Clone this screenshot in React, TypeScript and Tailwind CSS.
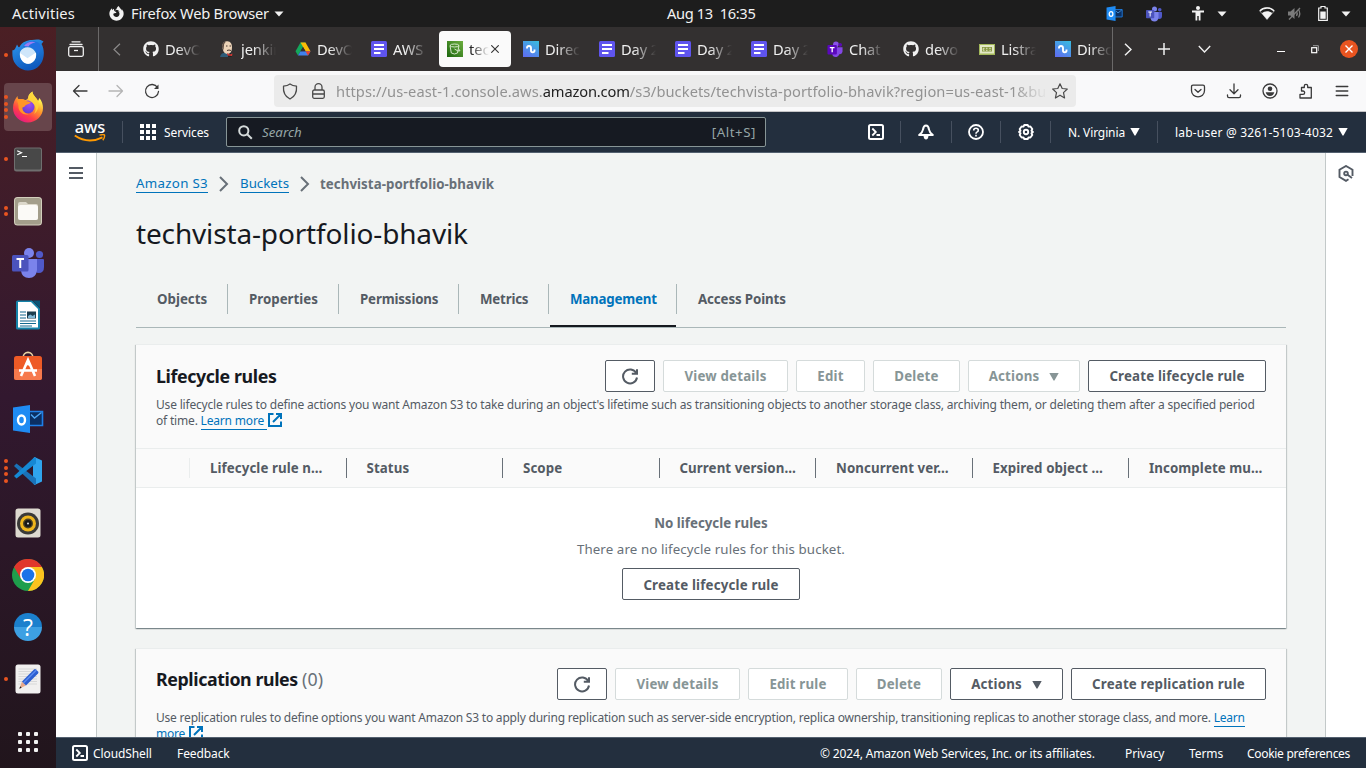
import type { ReactNode } from "react";
import { FaGithub, FaFirefoxBrowser } from "react-icons/fa";

/* ---------- dock icons ---------- */

const Thunderbird = () => (
  <svg width="32" height="32" viewBox="0 0 32 32">
    <defs>
      <linearGradient id="tb" x1="0" y1="0" x2="0.4" y2="1">
        <stop offset="0" stopColor="#2f9bf0" />
        <stop offset="1" stopColor="#0f5bbf" />
      </linearGradient>
    </defs>
    <path d="M0.500 11 C2.500 12 3.500 9 5 5.500 C6 7.500 6.500 8.500 7.500 8 C10 3 15 1 20 1 C24 0 29 0 31.500 2.500 L29.500 5 C32 9 32.500 15 31 20 C29 27 23 31.500 16 31.500 C8 31.500 1 25 0.500 17 C0.300 14 0.300 12.500 0.500 11 Z" fill="url(#tb)" />
    <path d="M11 8 C14 2 22 0.500 27 4 C29.500 8 29 12 26 16 C25 10 19 6 11 8 Z" fill="#1f6fe0" />
    <path d="M12 7 C15 3 20 2 23.500 3.500 C20 4 17.500 5.500 16.500 7.500 Z" fill="#9d7cf0" />
    <path d="M8 13 C10 8.500 16 7 20 9.500 C24 12 25 16 23.500 19.500 C22 23.500 18 25.500 14.500 24.500 C10 23.500 7 18 8 13 Z" fill="#cfe6fa" />
    <path d="M8 14 L15.500 19.300 L24 13.500 C24.800 18 22.500 24 16.500 24.700 C11 25 7.500 19.500 8 14 Z" fill="#fff" />
  </svg>
);

const Firefox = () => (
  <svg width="32" height="32" viewBox="0 0 32 32">
    <defs>
      <linearGradient id="ff" x1="0.8" y1="0.1" x2="0.25" y2="1">
        <stop offset="0.1" stopColor="#fff44f" />
        <stop offset="0.4" stopColor="#ff9a2b" />
        <stop offset="0.7" stopColor="#ff3f47" />
        <stop offset="1" stopColor="#e3158b" />
      </linearGradient>
      <radialGradient id="ffc" cx="0.6" cy="0.3" r="0.8">
        <stop offset="0" stopColor="#a04df0" />
        <stop offset="1" stopColor="#5a3bd0" />
      </radialGradient>
    </defs>
    <path d="M1 17 C1 12 3 8 5.500 5 C5.500 7 6 8 7 8.500 C9 7.500 11 8 13 9 C14 9 15.500 8.500 16 7 C16 4 18 2 20.500 0.500 C20.500 4 24 6 26 10 L27.500 7 C30 10 31 14 31 17 C31 25 24 31.500 16 31.500 C8 31.500 1 25 1 17 Z" fill="url(#ff)" />
    <circle cx="16" cy="16" r="6.500" fill="url(#ffc)" />
    <path d="M5 8.500 C8 7.500 12 8 14 10 L19 11 C18 13 15 13.500 14 14 C12.500 15 13 16 10.500 16.500 C10 20 13 23 17 23 C12 25 6 21 6.500 15 C6.500 13 5 10.500 5 8.500 Z" fill="#ff9526" />
    <path d="M20.500 0.500 C20.500 4 24 6 26 10 C28 16 25 21 22 23 C26 17 22 12 18 10 C16 8 16 4 20.500 0.500Z" fill="#ffd43a" opacity="0.85" />
  </svg>
);

const TerminalApp = () => (
  <svg width="32" height="32" viewBox="0 0 32 32">
    <rect x="2" y="4.500" width="28" height="24" rx="2.500" fill="#6f6f6f" />
    <rect x="3" y="5.500" width="26" height="21" rx="1.500" fill="#484848" />
    <path d="M5.200 7.700 L9.500 9.700 L5.200 11.700 M10 13.500 H15" stroke="#fff" strokeWidth="1.200" fill="none" />
  </svg>
);

const Files = () => (
  <svg width="32" height="32" viewBox="0 0 32 32">
    <rect x="2" y="2" width="28" height="28.500" rx="3.500" fill="#d3cfbd" />
    <rect x="3" y="3" width="26" height="26.500" rx="2.500" fill="#a39e8b" />
    <path d="M6 11 V9 Q6 7 8 7 H14 L16 9 H24 Q26 9 26 11 V23 Q26 25 24 25 H8 Q6 25 6 23 Z" fill="#dcd8cb" />
    <rect x="6" y="10" width="20" height="15" rx="2.500" fill="#fbfaf7" />
  </svg>
);

const Teams = ({ size = 32 }: { size?: number }) => (
  <svg width={size} height={size} viewBox="0 0 32 32">
    <circle cx="27.500" cy="7.500" r="3.600" fill="#5059c9" />
    <circle cx="17" cy="6" r="5" fill="#7b83eb" />
    <path d="M22 12 H31 Q32 12 32 13 V20 Q32 26 26.500 26 Q23 26 22 23 Z" fill="#5059c9" />
    <path d="M10 12 H25 V23 Q24 31 17 31 Q10 31 9 24 Z" fill="#7b83eb" />
    <rect x="0" y="8" width="16.500" height="16.500" rx="1.500" fill="#4b53bc" />
    <path d="M4.500 12 H12 M8.250 12 V21" stroke="#fff" strokeWidth="2" />
  </svg>
);

const Writer = () => (
  <svg width="32" height="32" viewBox="0 0 32 32">
    <path d="M5.500 1.500 H20 L28 9.500 V29 Q28 30.500 26.500 30.500 H5.500 Q4 30.500 4 29 V3 Q4 1.500 5.500 1.500 Z" fill="#1583a9" />
    <path d="M6 3 H19 L26 10 V28.500 H6 Z" fill="#fff" />
    <path d="M20.500 1.500 H28 V9 Z" fill="#0a5576" />
    <path d="M8 13 H14 M8 16 H14 M8 19 H14 M8 22 H24 M8 24.500 H24 M8 27 H20" stroke="#12698f" strokeWidth="1.100" />
    <rect x="15" y="12.500" width="9" height="7" fill="#1c3e50" />
    <path d="M16 19 V17 L18.500 15.500 L20.500 17 L23 15.500 V19 Z" fill="#7fb7d6" />
  </svg>
);

const Software = () => (
  <svg width="32" height="32" viewBox="0 0 32 32">
    <path d="M11 7 C11 -0.500 21 -0.500 21 7" stroke="#e9d4a4" strokeWidth="1.600" fill="none" />
    <rect x="2" y="5" width="28" height="24" rx="2.500" fill="#ee5a26" />
    <path d="M2 18 H30 V26.500 Q30 29 27.500 29 H4.500 Q2 29 2 26.500 Z" fill="#f6794c" />
    <path d="M9 25 L16 9 L23 25 M7 19.500 H25" stroke="#fff" strokeWidth="2.600" fill="none" />
    <path d="M16 9 L19 15 L14 14 Z" fill="#fff" />
  </svg>
);

const Outlook = ({ size = 32 }: { size?: number }) => (
  <svg width={size} height={size} viewBox="0 0 32 32">
    <path d="M17 8.500 H30.500 V22.500 H17" fill="#0b2f63" stroke="#1e7fe8" strokeWidth="1.600" />
    <path d="M19 11.500 L22.500 15 L29.500 9.500" stroke="#4da5f5" strokeWidth="1.400" fill="none" />
    <path d="M1 4.500 L18 2 V30 L1 27.500 Z" fill="#1f8bf3" />
    <ellipse cx="9.500" cy="17" rx="3.500" ry="4.500" fill="none" stroke="#fff" strokeWidth="2.400" />
  </svg>
);

const VsCode = () => (
  <svg width="32" height="32" viewBox="0 0 32 32">
    <path d="M22.500 2 L30 5.500 V26.500 L22.500 30 L21 28 V4 Z" fill="#2fa4ee" />
    <path d="M2 11 L4.500 8.500 L24 23.500 V29.500 L22 29.500 Z" fill="#1a72b8" />
    <path d="M2 21 L4.500 23.500 L24 8.500 V2.500 L22 2.500 Z" fill="#1588d4" />
  </svg>
);

const Rhythmbox = () => (
  <svg width="32" height="32" viewBox="0 0 32 32">
    <rect x="3.500" y="1.500" width="25" height="29" rx="2.500" fill="#dedad0" />
    <circle cx="16" cy="16.500" r="11" fill="#3a3a38" />
    <circle cx="16" cy="16.500" r="8" fill="#efb61c" />
    <circle cx="16" cy="16.500" r="5" fill="#4c4223" />
    <circle cx="16" cy="16.500" r="3.600" fill="#171717" />
    <circle cx="16" cy="16.500" r="1" fill="#ddd" />
  </svg>
);

const Chrome = () => (
  <svg width="32" height="32" viewBox="0 0 32 32">
    <circle cx="16" cy="16" r="16" fill="#1e9e4c" />
    <path d="M2.100 8 A16 16 0 0 1 29.900 8 L16 8 L9.100 20 Z" fill="#e0362b" />
    <path d="M29.900 8 A16 16 0 0 1 16 32 L22.900 20 L23 8 Z" fill="#fcc31e" />
    <path d="M16 8 H29.900 L23 14 Z" fill="#fcc31e" />
    <circle cx="16" cy="16" r="8" fill="#fff" />
    <circle cx="16" cy="16" r="6.300" fill="#1b73e8" />
  </svg>
);

const Help = () => (
  <div className="flex h-[28px] w-[28px] items-center justify-center rounded-full bg-linear-to-b from-[#1b80cd] from-50% to-[#3da0e3] to-50% font-['Open_Sans',sans-serif] text-[23px] leading-none text-white">?</div>
);

const TextEditor = () => (
  <svg width="32" height="32" viewBox="0 0 32 32">
    <rect x="3.500" y="1.500" width="25" height="29" rx="2.500" fill="#f1f0ef" />
    <path d="M6.500 6 H25 M6.500 8.500 H25 M6.500 11 H25 M6.500 13.500 H25 M6.500 16 H25 M6.500 18.500 H25 M6.500 21 H25" stroke="#d5d5d5" strokeWidth="0.900" />
    <path d="M7.500 25.500 L10 18.500 L14 22.500 Z" fill="#e9a98a" />
    <path d="M7.300 25.700 L8.200 23.200 L9.700 24.700 Z" fill="#222" />
    <path d="M10 18.500 L22 6.500 Q23 5.500 24 6.500 L26 8.500 Q27 9.500 26 10.500 L14 22.500 Z" fill="#2d5fd0" />
    <path d="M11.500 20 L24.500 7" stroke="#5b8bf0" strokeWidth="1.500" />
  </svg>
);

const AppGrid = () => (
  <div className="grid grid-cols-3 gap-[4px]">
    {Array.from({ length: 9 }, (_, i) => (
      <i key={i} className="h-[4px] w-[4px] rounded-[1px] bg-[#f2f2f2]" />
    ))}
  </div>
);

const DOCK: { icon: ReactNode; dots: number; active?: boolean }[] = [
  { icon: <Thunderbird />, dots: 1 },
  { icon: <Firefox />, dots: 4, active: true },
  { icon: <TerminalApp />, dots: 1 },
  { icon: <Files />, dots: 2 },
  { icon: <Teams />, dots: 0 },
  { icon: <Writer />, dots: 0 },
  { icon: <Software />, dots: 0 },
  { icon: <Outlook />, dots: 0 },
  { icon: <VsCode />, dots: 4 },
  { icon: <Rhythmbox />, dots: 0 },
  { icon: <Chrome />, dots: 0 },
  { icon: <Help />, dots: 0 },
  { icon: <TextEditor />, dots: 1 },
];

function Dock() {
  return (
    <aside className="flex w-[56px] shrink-0 flex-col items-center gap-1 bg-linear-to-b from-[#4b1f24] via-[#32182f] via-50% to-[#21151c] pt-[4px] pb-[2px]">
      {DOCK.map((d, i) => (
        <div
          key={i}
          className={`relative flex h-[48px] w-[48px] shrink-0 items-center justify-center rounded-[4px] ${d.active ? "bg-[#67454b]" : ""}`}
        >
          {d.icon}
          <div className="absolute inset-y-0 left-0 flex w-[4px] flex-col items-center justify-center gap-[2.500px]">
            {Array.from({ length: d.dots }, (_, k) => (
              <i key={k} className="h-[4px] w-[4px] rounded-full bg-[#e95420]" />
            ))}
          </div>
        </div>
      ))}
      <div className="mt-auto flex h-[48px] items-center">
        <AppGrid />
      </div>
    </aside>
  );
}

/* ---------- desktop top bar ---------- */

const Caret = ({ className = "" }: { className?: string }) => (
  <svg width="10" height="6" viewBox="0 0 10 6" className={`shrink-0 ${className}`}>
    <path d="M0.500 0.500 H9.500 L5 5.500 Z" fill="currentColor" />
  </svg>
);

function TopBar() {
  return (
    <header className="flex h-[27px] shrink-0 items-center bg-[#1d1d1d] text-[14.67px] leading-[27px] text-[#f2f2f2]">
      <div className="flex w-[667px] shrink-0 items-center whitespace-nowrap pl-[12px]">
        <span className="w-[97px] tracking-[0.2px]">Activities</span>
        <FaFirefoxBrowser size={15} />
        <span className="ml-[7px] w-[143px] tracking-[-0.2px]">Firefox Web Browser</span>
        <Caret />
      </div>
      <div className="whitespace-pre tracking-[-0.36px]">Aug 13  16:35</div>
      <div className="flex flex-1 items-center justify-end pr-[15px]">
        <Outlook size={17} />
        <span className="ml-[23px] flex"><Teams size={16} /></span>
        <svg width="14" height="15" viewBox="0 0 14 15" className="ml-[29px]">
          <circle cx="7" cy="2" r="2" fill="currentColor" />
          <path d="M1 5.500 H13 M5.400 5 V14.500 M8.600 5 V14.500 M7 5 V10" stroke="currentColor" strokeWidth="1.800" fill="none" />
        </svg>
        <Caret className="ml-[12px]" />
        <svg width="16" height="13" viewBox="0 0 16 13" className="ml-[32px]">
          <path d="M8 12.500 L0.800 4 C4.500 -0.500 11.500 -0.500 15.200 4 Z" fill="none" stroke="#8d8d8d" strokeWidth="1" />
          <path d="M0.800 4 C4.500 0 11.500 0 15.200 4" fill="none" stroke="#f2f2f2" strokeWidth="1.400" />
          <path d="M8 12.500 L2.800 6.200 C5.500 3.500 10.500 3.500 13.200 6.200 Z" fill="#f2f2f2" />
        </svg>
        <svg width="16" height="15" viewBox="0 0 16 15" className="ml-[12px] text-[#7b7b7b]">
          <path d="M1 5.500 H3.500 L7.500 2 V13 L3.500 9.500 H1 Z" fill="currentColor" />
          <path d="M9.500 5 Q11 7.500 9.500 10 M11.500 3.500 Q14 7.500 11.500 11.500" stroke="currentColor" fill="none" strokeWidth="1.300" />
          <path d="M2 13.500 L13 2" stroke="currentColor" strokeWidth="1.300" />
        </svg>
        <svg width="10" height="15" viewBox="0 0 10 15" className="ml-[15px]">
          <path d="M3 0.500 H7 V2 H9.300 V14.300 H0.700 V2 H3 Z" fill="none" stroke="currentColor" strokeWidth="1.200" />
          <rect x="2.300" y="5.500" width="5.400" height="7.300" fill="currentColor" />
        </svg>
        <Caret className="ml-[13px]" />
      </div>
    </header>
  );
}

/* ---------- browser tabs ---------- */

const DriveIcon = () => (
  <svg width="16" height="16" viewBox="0 0 16 16">
    <path d="M5.500 1.500 H10.500 L8 6 L3 14.500 L0.500 10.300 Z" fill="#14a75c" />
    <path d="M5.500 1.500 H10.500 L15.500 10.300 H10.500 Z" fill="#fbbc06" />
    <path d="M3 14.500 L5.500 10.300 H15.500 L13 14.500 Z" fill="#4081ee" />
    <path d="M10.500 10.300 H15.500 L13 14.500 Z" fill="#e9432f" />
    <path d="M5.500 10.300 L8 6 L10.500 10.300 Z" fill="#333030" />
  </svg>
);

const JenkinsIcon = () => (
  <svg width="16" height="16" viewBox="0 0 16 16">
    <path d="M1 16 Q2 12 5 12 L11 11 Q13 12 13 16 Z" fill="#2e5c78" />
    <path d="M9 12 L12 12 L13 16 H9 Z" fill="#222" />
    <path d="M3 5 Q4 0 8.500 0.300 Q13 0.800 13 6 Q13 12 9 13 Q5 13 4 9 Z" fill="#ecd3b8" />
    <path d="M3 6 Q3 1 7 0.500 Q5 2 4.800 6 L4.500 9 Z" fill="#5c4b42" />
    <path d="M7 5 H8.500 M10.500 5 H12 M8 9.500 Q10 8.500 12 9.500" stroke="#4a3830" strokeWidth="1" fill="none" />
    <path d="M8 12 L11 13.500 L13.500 12.500 L13 15 L8.500 14.500 Z" fill="#d33833" />
  </svg>
);

const DocIcon = () => (
  <svg width="16" height="16" viewBox="0 0 16 16">
    <rect width="16" height="16" rx="1.500" fill="#5f54ee" />
    <path d="M3 4 H13 M3 8 H13 M3 12 H9.500" stroke="#fff" strokeWidth="1.800" />
  </svg>
);

const BucketIcon = () => (
  <svg width="16" height="16" viewBox="0 0 16 16">
    <defs>
      <linearGradient id="s3" x1="0" y1="1" x2="1" y2="0">
        <stop offset="0" stopColor="#1b660f" />
        <stop offset="1" stopColor="#6cae3e" />
      </linearGradient>
    </defs>
    <rect width="16" height="16" fill="url(#s3)" />
    <path d="M3 4.500 L4.300 12 Q7.500 14 10.500 12 L12 4.500 M3 4.500 Q3.500 3 7.500 3 Q11.500 3 12 4.500 Q11.500 6 7.500 6 Q3.500 6 3 4.500 M7.500 8 Q11 10.500 12.700 10 Q13.500 9.300 11.500 8" fill="none" stroke="#e3f0da" strokeWidth="0.900" />
  </svg>
);

const WaveIcon = () => (
  <svg width="16" height="16" viewBox="0 0 16 16">
    <defs>
      <linearGradient id="wv" x1="0.2" y1="1" x2="0.8" y2="0">
        <stop offset="0" stopColor="#5d6ff0" />
        <stop offset="1" stopColor="#3bb8e0" />
      </linearGradient>
    </defs>
    <rect width="16" height="16" fill="url(#wv)" />
    <path d="M4 7.500 V7 Q4 5 6 5 Q8 5 8 7 V9.500 Q8 11.300 9.700 11.300 Q11.500 11.300 11.500 9.500 V8.500" fill="none" stroke="#fff" strokeWidth="1.900" />
  </svg>
);

const TeamsTabIcon = () => (
  <svg width="17" height="17" viewBox="0 0 17 17">
    <circle cx="9.500" cy="3" r="3" fill="#8a52e8" />
    <circle cx="14" cy="3.500" r="2" fill="#5b0ab5" />
    <path d="M7 6 H16.500 V11 Q16 14 13 13.500 Q12 16.500 9 16.500 Q6 16.500 5.500 13 Z" fill="#8447e6" />
    <rect x="0.500" y="3.800" width="10" height="10" rx="1" fill="#5a08bd" />
    <path d="M3 6.500 H8 M5.500 6.500 V11.500" stroke="#fff" strokeWidth="1.400" />
  </svg>
);

const CbsIcon = () => (
  <svg width="16" height="16" viewBox="0 0 16 16">
    <rect y="3" width="16" height="11" fill="#a3b85a" />
    <rect x="1" y="4" width="14" height="8.500" fill="#e3e8c6" />
    <rect x="3" y="6" width="10" height="4.500" fill="#8a9a45" />
    <path d="M5.500 7.300 H4.200 V9.300 H5.500 M7 7.300 H8.500 M7 9.300 H8.500 M11.800 7.300 H10.200 M10.500 9.300 H11.800" fill="none" stroke="#f3f6e0" strokeWidth="0.800" />
  </svg>
);

const TABS: { icon: ReactNode; label: string; active?: boolean }[] = [
  { icon: <FaGithub size={16} />, label: "DevO" },
  { icon: <JenkinsIcon />, label: "jenkin" },
  { icon: <DriveIcon />, label: "DevO" },
  { icon: <DocIcon />, label: "AWS" },
  { icon: <BucketIcon />, label: "tech", active: true },
  { icon: <WaveIcon />, label: "Direc" },
  { icon: <DocIcon />, label: "Day 2" },
  { icon: <DocIcon />, label: "Day 2" },
  { icon: <DocIcon />, label: "Day 2" },
  { icon: <TeamsTabIcon />, label: "Chat" },
  { icon: <FaGithub size={16} />, label: "devo" },
  { icon: <CbsIcon />, label: "Listra" },
  { icon: <WaveIcon />, label: "Direc" },
];

function TabStrip() {
  return (
    <div className="flex h-[44px] shrink-0 items-center bg-[#333030] text-[#f0f0f0]">
      <div className="flex h-full w-[43px] items-center justify-center border-r border-[#6b6969]">
        <svg width="16" height="16" viewBox="0 0 16 16" className="-ml-[3px]">
          <path d="M4 0.800 H12 M2 3.500 H14" stroke="currentColor" strokeWidth="1.300" strokeLinecap="round" />
          <rect x="0.700" y="5.700" width="14.600" height="9.600" rx="1.500" fill="none" stroke="currentColor" strokeWidth="1.300" />
          <path d="M6 9.500 H10" stroke="currentColor" strokeWidth="1.300" />
        </svg>
      </div>
      <div className="flex w-[36px] justify-center text-[#8b8989]">
        <svg width="8" height="13" viewBox="0 0 8 13">
          <path d="M7 0.800 L1 6.500 L7 12.200" fill="none" stroke="currentColor" strokeWidth="1.200" />
        </svg>
      </div>
      <div className="flex h-full w-[978px] shrink-0 items-center gap-[4px] overflow-hidden border-r border-[#6b6969]">
        {TABS.map((t, i) => (
          <div
            key={i}
            className={`flex h-[36px] w-[72px] shrink-0 items-center rounded-[4px] pl-[8px] ${t.active ? "bg-[#fafafa] text-[#222]" : ""}`}
          >
            <span className="flex w-[16px] shrink-0">{t.icon}</span>
            <span
              className={`ml-[6px] overflow-hidden whitespace-nowrap text-[14.67px] leading-[24px] ${t.active ? "w-[20px] mask-r-from-10% mask-r-to-100%" : "w-[35px] tracking-[-0.1px] mask-r-from-35% mask-r-to-100%"}`}
            >
              {t.label}
            </span>
            {t.active && (
              <svg width="8" height="8" viewBox="0 0 8 8" className="ml-[2px]">
                <path d="M0.300 0.300 L7.700 7.700 M7.700 0.300 L0.300 7.700" stroke="#333" strokeWidth="1.100" />
              </svg>
            )}
          </div>
        ))}
      </div>
      <div className="flex flex-1 items-center">
        <svg width="8" height="13" viewBox="0 0 8 13" className="ml-[11px]">
          <path d="M1 0.800 L7 6.500 L1 12.200" fill="none" stroke="currentColor" strokeWidth="1.500" />
        </svg>
        <svg width="12" height="12" viewBox="0 0 12 12" className="ml-[26px]">
          <path d="M6 0 V12 M0 6 H12" stroke="currentColor" strokeWidth="1.500" />
        </svg>
        <svg width="13" height="8" viewBox="0 0 13 8" className="ml-[28px]">
          <path d="M0.800 1 L6.500 7 L12.200 1" fill="none" stroke="currentColor" strokeWidth="1.400" />
        </svg>
        <i className="mt-[5px] ml-[66px] h-[1px] w-[8px] bg-white" />
        <svg width="8" height="9" viewBox="0 0 8 9" className="ml-[26px]">
          <rect x="0.700" y="2.700" width="5" height="5" fill="none" stroke="#fff" strokeWidth="1.200" />
          <path d="M2 0.700 H7.400 V6" fill="none" stroke="#aaa" strokeWidth="0.900" />
        </svg>
        <span className="ml-[21px] flex h-[18px] w-[18px] items-center justify-center rounded-full bg-[#e95420]">
          <svg width="8" height="8" viewBox="0 0 8 8">
            <path d="M0.500 0.500 L7.500 7.500 M7.500 0.500 L0.500 7.500" stroke="#fff" strokeWidth="1.400" />
          </svg>
        </span>
      </div>
    </div>
  );
}

/* ---------- browser toolbar ---------- */

const ToolIcon = ({ children, dim }: { children: ReactNode; dim?: boolean }) => (
  <span className={`flex w-[36px] justify-center ${dim ? "text-[#b5b5b5]" : "text-[#3a3a3a]"}`}>
    <svg width="16" height="16" viewBox="0 0 16 16" fill="none" stroke="currentColor" strokeWidth="1.300" strokeLinecap="round" strokeLinejoin="round">
      {children}
    </svg>
  </span>
);

function Toolbar() {
  return (
    <div className="flex h-[41px] shrink-0 items-center border-b border-[#c4c4c6] bg-[#f9f9fa] pr-[6px] pl-[6px]">
      <ToolIcon><path d="M15 8 H1.500 M7 2.500 L1.500 8 L7 13.500" /></ToolIcon>
      <ToolIcon dim><path d="M1 8 H14.500 M9 2.500 L14.500 8 L9 13.500" /></ToolIcon>
      <ToolIcon>
        <path d="M13.500 4.500 A6.500 6.500 0 1 0 14.500 8.500" />
        <path d="M14.500 1.500 V6 H10 Z" fill="currentColor" stroke="none" />
      </ToolIcon>
      <div className="ml-[104px] flex h-[32px] w-[802px] items-center rounded-[4px] bg-[#ebebeb] text-[#4a4a4a]">
        <svg width="16" height="17" viewBox="0 0 16 17" className="ml-[8px]" fill="none" stroke="currentColor" strokeWidth="1.300" strokeLinejoin="round">
          <path d="M8 1 C10 2.500 12 3 14.500 3.200 C15 9 13 13.500 8 16 C3 13.500 1 9 1.500 3.200 C4 3 6 2.500 8 1 Z" />
        </svg>
        <svg width="13" height="16" viewBox="0 0 13 16" className="ml-[14px]" fill="none" stroke="currentColor" strokeWidth="1.300">
          <rect x="0.700" y="7" width="11.600" height="8.300" rx="1.500" />
          <path d="M3 7 V4.200 A3.500 3.500 0 0 1 10 4.200 V7 M1 11 H12" />
        </svg>
        <div className="ml-[11px] flex w-[712px] overflow-hidden whitespace-nowrap text-[14.67px] leading-[24px] text-[#929292] mask-r-from-95% mask-r-to-100%">
          <span className="tracking-[0.07px]">https://us-east-1.console.aws.</span>
          <span className="tracking-[-0.15px] text-[#222]">amazon.com</span>
          <span className="tracking-[0.08px]">/s3/buckets/techvista-portfolio-bhavik?region=us-east-1&amp;bu</span>
        </div>
        <svg width="16" height="16" viewBox="0 0 16 16" className="ml-[4px]" fill="none" stroke="currentColor" strokeWidth="1.200" strokeLinejoin="round">
          <path d="M8 0.800 L10.200 5.500 L15.300 6 L11.500 9.600 L12.600 15 L8 12.200 L3.400 15 L4.500 9.600 L0.700 6 L5.800 5.500 Z" />
        </svg>
      </div>
      <div className="ml-auto flex">
        <ToolIcon>
          <path d="M3 2.200 H13 Q14.500 2.200 14.500 3.700 V7.500 C14.500 16 1.500 16 1.500 7.500 V3.700 Q1.500 2.200 3 2.200 Z M5 6.500 L8 9.300 L11 6.500" />
        </ToolIcon>
        <ToolIcon><path d="M8 1 V10.500 M4 6.800 L8 10.700 L12 6.800 M1.500 12 V13 Q1.500 14.700 3 14.700 H13 Q14.500 14.700 14.500 13 V12" /></ToolIcon>
        <ToolIcon>
          <circle cx="8" cy="8" r="7" />
          <circle cx="8" cy="5.800" r="2.300" fill="currentColor" stroke="none" />
          <path d="M3.700 9.300 H12.300 Q11.500 13 8 13 Q4.500 13 3.700 9.300 Z" fill="currentColor" stroke="none" />
        </ToolIcon>
        <ToolIcon><path d="M2 15 H13.300 V4.500 H9.700 V3 A1.700 1.700 0 0 0 6.300 3 V4.500 H3.500 V8 H5 A1.600 1.600 0 0 1 5 11.300 H2 Z" /></ToolIcon>
        <ToolIcon><path d="M2.200 3.500 H13.800 M2.200 8 H13.800 M2.200 12.500 H13.800" /></ToolIcon>
      </div>
    </div>
  );
}

/* ---------- AWS navigation ---------- */

const ShellIcon = () => (
  <svg width="16" height="16" viewBox="0 0 16 16" fill="none" stroke="currentColor" strokeWidth="2">
    <rect x="1" y="1" width="14" height="14" rx="1.500" />
    <path d="M4.300 4.500 L7.800 8 L4.300 11.500 M8.500 11 H12" strokeWidth="1.800" />
  </svg>
);

const Bell = () => (
  <svg width="16" height="16" viewBox="0 0 16 16" fill="none" stroke="currentColor" strokeWidth="2" strokeLinejoin="round">
    <path d="M8 1.500 C6 1.500 5.300 3.500 5 5.500 C4.700 8 3 9.500 1.200 11 H14.800 C13 9.500 11.300 8 11 5.500 C10.700 3.500 10 1.500 8 1.500 Z" />
    <path d="M5.500 12 H10.500 Q10 15.500 8 15.500 Q6 15.500 5.500 12 Z" fill="currentColor" stroke="none" />
  </svg>
);

const Question = () => (
  <svg width="16" height="16" viewBox="0 0 16 16" fill="none" stroke="currentColor" strokeWidth="1.800">
    <circle cx="8" cy="8" r="7" />
    <path d="M5.700 6.500 Q5.700 4.300 8 4.300 Q10.300 4.300 10.300 6.200 Q10.300 7.300 9.200 7.900 Q8 8.500 8 9.700 M8 10.800 V12.500" strokeWidth="1.600" />
  </svg>
);

const Gear = () => (
  <svg width="16" height="16" viewBox="0 0 16 16" fill="none" stroke="currentColor" strokeWidth="1.900" strokeLinejoin="round">
    <path d="M6.300 1 H9.700 L10.500 2.600 L12.400 2.500 L14.300 5 L13.500 6.700 L14.900 8 L13.500 9.300 L14.300 11 L12.400 13.500 L10.500 13.400 L9.700 15 H6.300 L5.500 13.400 L3.600 13.500 L1.700 11 L2.500 9.300 L1.100 8 L2.500 6.700 L1.700 5 L3.600 2.500 L5.500 2.600 Z" />
    <circle cx="8" cy="8" r="2.200" />
  </svg>
);

const Tri = ({ className = "" }: { className?: string }) => (
  <svg width="10" height="8" viewBox="0 0 10 8" className={`shrink-0 ${className}`}>
    <path d="M0.300 0 H9.700 L5.600 7.300 Q5 8 4.400 7.300 Z" fill="currentColor" />
  </svg>
);

const Sep = () => <i className="h-[22px] w-px shrink-0 bg-[#46505f]" />;

function AwsNav() {
  return (
    <nav className="flex h-[41px] shrink-0 items-center border-b border-[#53606f] bg-[#232f3e] text-[12px] leading-[18px] text-white">
      <div className="ml-[18px] flex w-[32px] flex-col items-center">
        <span className="mt-[-2px] text-[16.5px] leading-[13px] font-medium tracking-[-0.1px]">aws</span>
        <svg width="32" height="9" viewBox="0 0 32 9" className="mt-[1px]">
          <path d="M0.800 1.500 Q14 10.500 28.500 3.300" fill="none" stroke="#f90" strokeWidth="2" />
          <path d="M25.500 1.200 Q29.500 0 30.500 1 Q31 3.500 28.800 6.300" fill="none" stroke="#f90" strokeWidth="1.400" />
        </svg>
      </div>
      <span className="mr-[17px] ml-[16px] flex"><Sep /></span>
      <div className="grid grid-cols-3 gap-[2px]">
        {Array.from({ length: 9 }, (_, i) => (
          <i key={i} className="h-[4px] w-[4px] bg-white" />
        ))}
      </div>
      <span className="ml-[8px] w-[62px] pt-[2px] tracking-[-0.1px]">Services</span>
      <div className="flex h-[30px] w-[540px] items-center rounded-[2px] border border-[#879596] bg-[#161a22] text-[13.3px] text-[#95a5a6]">
        <svg width="15" height="15" viewBox="0 0 15 15" className="ml-[11px]" fill="none" stroke="#d5dbdb" strokeWidth="2">
          <circle cx="5.800" cy="5.800" r="4.600" />
          <path d="M9.200 9.200 L13.800 13.800" />
        </svg>
        <span className="ml-[9px] italic">Search</span>
        <span className="mr-[9px] ml-auto tracking-[0.55px]">[Alt+S]</span>
      </div>
      <div className="ml-auto flex items-center">
        <span className="flex w-[49px] justify-center"><ShellIcon /></span>
        <Sep />
        <span className="flex w-[50px] justify-center"><Bell /></span>
        <Sep />
        <span className="flex w-[48px] justify-center"><Question /></span>
        <Sep />
        <span className="flex w-[49px] justify-center"><Gear /></span>
        <Sep />
        <span className="ml-[17px] w-[62px] pt-[2px] tracking-[-0.12px]">N. Virginia</span>
        <Tri />
        <i className="w-[17px]" />
        <Sep />
        <span className="ml-[17px] w-[163px] pt-[2px] whitespace-nowrap tracking-[0.2px]">lab-user @ 3261-5103-4032</span>
        <Tri className="mr-[18px]" />
      </div>
    </nav>
  );
}

/* ---------- S3 page ---------- */

const Refresh = () => (
  <svg width="18" height="18" viewBox="0 0 18 18" fill="none" stroke="currentColor" strokeWidth="2">
    <path d="M15.200 5 A7 7 0 1 0 16 9.500" />
    <path d="M16 1.300 V5.700 H10.800" />
  </svg>
);

const External = () => (
  <svg width="14" height="14" viewBox="0 0 14 14" fill="none" stroke="currentColor" strokeWidth="2" className="inline-block align-[-2px]">
    <path d="M5.500 1 H1 V13 H13 V8.500 M8 1 H13 V6 M13 1 L5 9" />
  </svg>
);

function Button({ children, off, className = "" }: { children: ReactNode; off?: boolean; className?: string }) {
  return (
    <button
      className={`flex h-[32px] shrink-0 items-center justify-center rounded-[2px] border bg-white pt-px text-[13.3px] font-bold tracking-[0.18px] whitespace-nowrap ${off ? "border-[#d5dbdb] text-[#879596]" : "border-[#545b64] text-[#545b64]"} ${className}`}
    >
      {children}
    </button>
  );
}

const Chevron = () => (
  <svg width="10" height="16" viewBox="0 0 10 16" fill="none" stroke="#687078" strokeWidth="2">
    <path d="M1 1 L8 8 L1 15" />
  </svg>
);

const PAGE_TABS = [
  { label: "Objects", cls: "w-[92px] pl-[21px]" },
  { label: "Properties", cls: "w-[111px] pl-[21px]" },
  { label: "Permissions", cls: "w-[120px] pl-[21px] tracking-[-0.15px]" },
  { label: "Metrics", cls: "w-[90px] pl-[21px] tracking-[-0.2px]" },
  { label: "Management", cls: "w-[128px] pl-[21px] tracking-[-0.2px]" },
  { label: "Access Points", cls: "w-[130px] pl-[21px] tracking-[-0.12px]" },
];

const COLUMNS = ["Lifecycle rule n…", "Status", "Scope", "Current version…", "Noncurrent ver…", "Expired object …", "Incomplete mu…"];

const PANEL = "shadow-[0_1px_1px_0_rgba(0,28,36,0.3),1px_1px_1px_0_rgba(0,28,36,0.15),-1px_1px_1px_0_rgba(0,28,36,0.15)] border-t border-[#eaeded] bg-white";

function Lifecycle() {
  return (
    <section className={`mt-4 h-[284px] shrink-0 ${PANEL}`}>
      <div className="h-[103px] bg-[#fafafa] px-[20px] pt-[15px]">
        <div className="flex items-center">
          <h2 className="pt-px text-[17.8px] font-bold tracking-[-0.38px] text-[#16191f]">Lifecycle rules</h2>
          <div className="ml-auto flex gap-2">
            <Button className="w-[50px]"><Refresh /></Button>
            <Button off className="w-[125px]">View details</Button>
            <Button off className="w-[69px]">Edit</Button>
            <Button off className="w-[87px]">Delete</Button>
            <Button off className="w-[112px]">Actions<Tri className="ml-[10px]" /></Button>
            <Button className="w-[178px]">Create lifecycle rule</Button>
          </div>
        </div>
        <p className="mt-[5px] text-[12px] leading-[16px] tracking-[-0.185px] whitespace-nowrap text-[#545b64]">
          Use lifecycle rules to define actions you want Amazon S3 to take during an object's lifetime such as transitioning objects to another storage class, archiving them, or deleting them after a specified period
          <br />
          of time. <a className="border-b border-[#0073bb] text-[#0073bb]">Learn more </a>
          <span className="ml-px text-[#0073bb]"><External /></span>
        </p>
      </div>
      <div className="flex h-[40px] items-center border-y border-[#eaeded] bg-[#fafafa]">
        <i className="w-[53px] shrink-0" />
        {COLUMNS.map((c, i) => (
          <div
            key={c}
            className={`flex h-[20px] w-[156.500px] shrink-0 items-center border-l pt-[2px] pl-[20px] text-[13.3px] font-bold tracking-[0.08px] whitespace-nowrap text-[#545b64] ${i === 0 ? "border-[#eaeded]" : "border-[#687078]"}`}
          >
            {c}
          </div>
        ))}
      </div>
      <div className="flex flex-col items-center pt-[25px] text-[13.3px] leading-[20px] text-[#687078]">
        <b className="font-bold">No lifecycle rules</b>
        <p className="mt-[6px] mb-[9px] tracking-[0.1px]">There are no lifecycle rules for this bucket.</p>
        <Button className="w-[178px]">Create lifecycle rule</Button>
      </div>
    </section>
  );
}

function Replication() {
  return (
    <section className={`mt-5 h-[120px] shrink-0 ${PANEL}`}>
      <div className="h-full bg-[#fafafa] px-[20px] pt-[19px]">
        <div className="flex items-start">
          <h2 className="text-[17.8px] leading-[23px] font-bold tracking-[-0.4px] text-[#16191f]">
            Replication rules <span className="font-normal tracking-[0.1px] text-[#687078]">(0)</span>
          </h2>
          <div className="ml-auto flex gap-2">
            <Button className="w-[50px]"><Refresh /></Button>
            <Button off className="w-[125px]">View details</Button>
            <Button off className="w-[100px]">Edit rule</Button>
            <Button off className="w-[86px]">Delete</Button>
            <Button className="w-[113px]">Actions<Tri className="ml-[10px]" /></Button>
            <Button className="w-[195px]">Create replication rule</Button>
          </div>
        </div>
        <p className="mt-[10px] text-[12px] leading-[16px] tracking-[-0.205px] whitespace-nowrap text-[#545b64]">
          Use replication rules to define options you want Amazon S3 to apply during replication such as server-side encryption, replica ownership, transitioning replicas to another storage class, and more.{" "}
          <a className="border-b border-[#0073bb] text-[#0073bb]">Learn</a>
          <br />
          <a className="border-b border-[#0073bb] text-[#0073bb]">more </a>
          <span className="ml-px text-[#0073bb]"><External /></span>
        </p>
      </div>
    </section>
  );
}

function S3Page() {
  return (
    <div className="flex min-h-0 flex-1 bg-white">
      <div className="flex w-[41px] shrink-0 justify-center border-r border-[#c3c9c9] pt-[14px]">
        <div className="flex w-[14px] flex-col gap-[3px]">
          <i className="h-[2px] bg-[#545b64]" />
          <i className="h-[2px] bg-[#545b64]" />
          <i className="h-[2px] bg-[#545b64]" />
        </div>
      </div>
      <main className="flex w-[1228px] flex-col overflow-hidden bg-[#f2f4f3] pr-[39px] pl-[39px]">
        <div className="mt-[21px] flex h-[20px] shrink-0 items-center text-[13.3px] leading-[17px]">
          <a className="w-[72px] border-b border-[#0073bb] tracking-[0.3px] whitespace-nowrap text-[#0073bb]">Amazon S3</a>
          <span className="mr-[11px] ml-[11px]"><Chevron /></span>
          <a className="w-[49px] border-b border-[#0073bb] text-[#0073bb]">Buckets</a>
          <span className="mr-[10px] ml-[11px]"><Chevron /></span>
          <span className="font-bold tracking-[0.05px] text-[#687078]">techvista-portfolio-bhavik</span>
        </div>
        <h1 className="mt-[19px] shrink-0 text-[28px] leading-[40px] tracking-[-0.15px] text-[#16191f]">techvista-portfolio-bhavik</h1>
        <div className="mt-[21px] flex h-[54px] shrink-0 border-b border-[#aab7b8] pt-[10px] text-[13.3px] font-bold text-[#545b64]">
          {PAGE_TABS.map((t) => {
            const active = t.label === "Management";
            return (
              <div key={t.label} className={`relative h-[43px] shrink-0 ${t.cls} ${active ? "text-[#0073bb]" : ""}`}>
                <span className="flex h-[30px] items-center pt-[2px]">{t.label}</span>
                {t.label !== "Access Points" && <i className="absolute top-0 right-0 h-[30px] w-px bg-[#aab7b8]" />}
                {active && <i className="absolute right-[1px] bottom-0 left-[1px] h-[2px] bg-[#16191f]" />}
              </div>
            );
          })}
        </div>
        <Lifecycle />
        <Replication />
      </main>
      <div className="flex flex-1 justify-center border-l border-[#c3c9c9] pt-[12px]">
        <svg width="16" height="17" viewBox="0 0 16 17" fill="none" stroke="#545b64" strokeWidth="1.900">
          <path d="M14.500 11 V4.700 L8 1 L1.500 4.700 V12 L8 15.800 L10.500 14.300" />
          <circle cx="8" cy="8.400" r="1.800" />
          <path d="M9.500 9.700 L14 13" />
        </svg>
      </div>
    </div>
  );
}

function Footer() {
  return (
    <footer className="flex h-[31px] shrink-0 items-center border-t border-[#53606f] bg-[#232f3e] pr-[16px] pl-[16px] text-[12px] whitespace-nowrap text-white">
      <ShellIcon />
      <span className="ml-[5px] w-[84px] pt-[2px] tracking-[-0.1px]">CloudShell</span>
      <span className="pt-[2px] tracking-[-0.1px]">Feedback</span>
      <span className="ml-auto w-[305px] pt-[2px] tracking-[-0.15px]">© 2024, Amazon Web Services, Inc. or its affiliates.</span>
      <span className="w-[64px] pt-[2px] tracking-[-0.1px]">Privacy</span>
      <span className="w-[58px] pt-[2px] tracking-[-0.1px]">Terms</span>
      <span className="w-[103px] pt-[2px] tracking-[-0.3px]">Cookie preferences</span>
    </footer>
  );
}

export default function App() {
  return (
    <div className="flex h-[768px] w-[1366px] flex-col overflow-hidden font-['Noto_Sans',sans-serif]">
      <TopBar />
      <div className="flex min-h-0 flex-1">
        <Dock />
        <div className="flex min-w-0 flex-1 flex-col">
          <TabStrip />
          <Toolbar />
          <AwsNav />
          <S3Page />
          <Footer />
        </div>
      </div>
    </div>
  );
}
